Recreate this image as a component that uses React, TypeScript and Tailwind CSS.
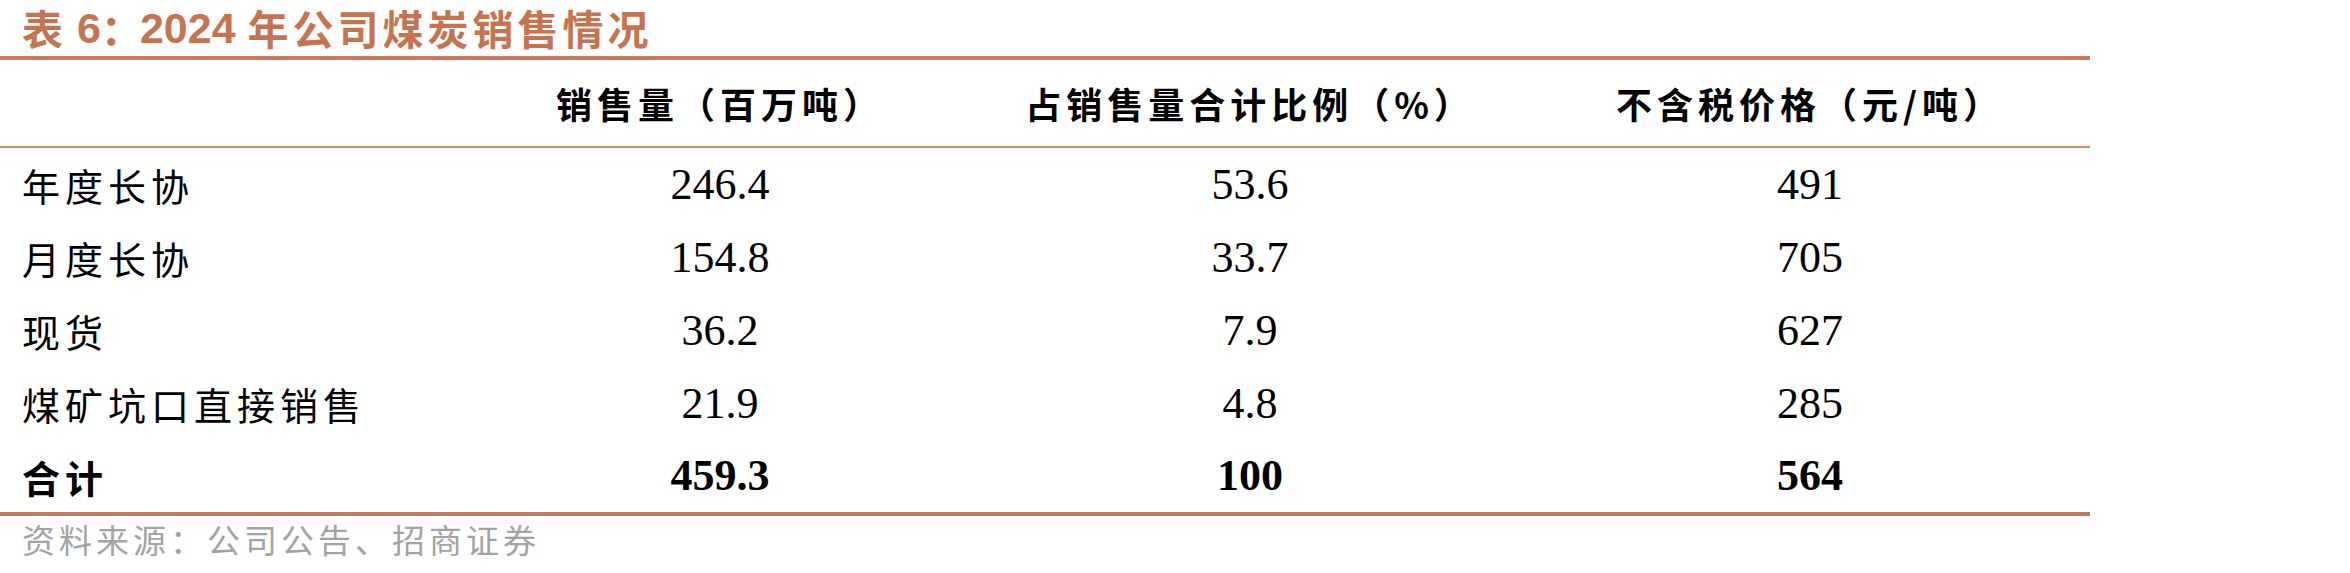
const rows = [
  { name: '年度长协', volume: '246.4', share: '53.6', price: '491' },
  { name: '月度长协', volume: '154.8', share: '33.7', price: '705' },
  { name: '现货', volume: '36.2', share: '7.9', price: '627' },
  { name: '煤矿坑口直接销售', volume: '21.9', share: '4.8', price: '285' },
]

const cjk = "font-['Noto_Sans_CJK_SC',sans-serif]"
const num = "font-['Liberation_Serif','Noto_Sans_CJK_SC',serif]"
const grid = 'grid grid-cols-[470px_500px_560px_560px]'

function HeaderCell({ children }: { children: React.ReactNode }) {
  return (
    <div className={`flex items-center justify-center text-[36px] font-bold tracking-[5px] text-black ${cjk}`}>
      {children}
    </div>
  )
}

function NumCell({ value, bold }: { value: string; bold?: boolean }) {
  return (
    <div className={`flex items-center justify-center text-[44px] text-black ${num} ${bold ? 'font-bold' : ''}`}>
      {value}
    </div>
  )
}

export default function App() {
  return (
    <div className="h-[573px] w-[2350px] overflow-hidden bg-white">
      <div className="w-[2090px]">
        <h1 className="flex h-[56px] items-center pl-[22px] text-[41px] font-bold leading-[1.36] text-[#c8734f]">
          <span className={cjk}>表</span>
          <span className="ml-[14px] text-[43px] font-['Liberation_Sans',sans-serif]">6</span>
          <span className={cjk}>：</span>
          <span className="ml-[-2px] text-[43px] font-['Liberation_Sans',sans-serif]">2024</span>
          <span className={`ml-[12px] tracking-[4px] ${cjk}`}>年公司煤炭销售情况</span>
        </h1>
        <div className="h-[4px] bg-[#c97a5a]" />

        <div className={`${grid} h-[86px]`}>
          <div />
          <HeaderCell>销售量（百万吨）</HeaderCell>
          <HeaderCell>占销售量合计比例（%）</HeaderCell>
          <HeaderCell>不含税价格（元/吨）</HeaderCell>
        </div>
        <div className="h-[2px] bg-[#dc8866]" />

        {rows.map((r) => (
          <div key={r.name} className={`${grid} h-[73px]`}>
            <div className={`flex items-center pl-[22px] text-[38px] tracking-[5px] text-black ${cjk}`}>
              {r.name}
            </div>
            <NumCell value={r.volume} />
            <NumCell value={r.share} />
            <NumCell value={r.price} />
          </div>
        ))}
        <div className={`${grid} h-[72px]`}>
          <div className={`flex items-center pl-[22px] text-[38px] font-bold tracking-[5px] text-black ${cjk}`}>
            合计
          </div>
          <NumCell value="459.3" bold />
          <NumCell value="100" bold />
          <NumCell value="564" bold />
        </div>
        <div className="h-[4px] bg-[#c07a60]" />

        <div className={`flex h-[48px] items-center pl-[22px] text-[33px] tracking-[4px] text-[#a3a3a3] ${cjk}`}>
          资料来源：公司公告、招商证券
        </div>
      </div>
    </div>
  )
}
